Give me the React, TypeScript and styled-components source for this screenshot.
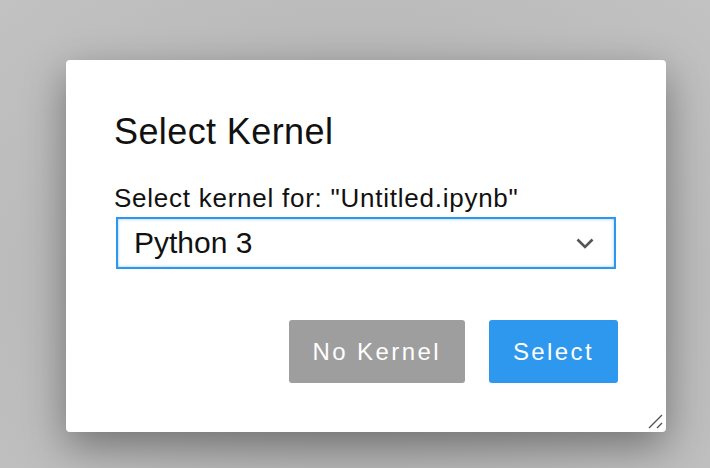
import React from "react";
import styled, { createGlobalStyle } from "styled-components";

const Global = createGlobalStyle`
  html, body { margin: 0; padding: 0; }
  body {
    background: #bdbdbd;
    font-family: "Liberation Sans", Arial, sans-serif;
    width: 710px;
    height: 468px;
    overflow: hidden;
  }
`;

const Backdrop = styled.div`
  width: 710px;
  height: 468px;
  box-sizing: border-box;
  padding: 60px 0 0 66px;
  background: radial-gradient(ellipse at 50% 60%, #a9a9a9 0%, #bcbcbc 70%, #c2c2c2 100%);
`;

const Dialog = styled.div`
  position: relative;
  width: 600px;
  height: 372px;
  box-sizing: border-box;
  background: #ffffff;
  border-radius: 4px;
  box-shadow: 0 14px 40px rgba(0, 0, 0, 0.38);
  padding: 51px 48px 0 48px;
  display: flex;
  flex-direction: column;
`;

const Title = styled.h1`
  margin: 0;
  font-size: 36px;
  font-weight: 400;
  letter-spacing: 0.4px;
  line-height: 41px;
  color: #111;
`;

const Label = styled.label`
  margin-top: 31px;
  font-size: 26px;
  line-height: 30px;
  letter-spacing: 0.75px;
  color: #111;
`;

const SelectBox = styled.div`
  margin: 4px 0 0 2px;
  width: 500px;
  height: 52px;
  box-sizing: border-box;
  border: 2px solid #2d96ee;
  box-shadow: inset 0 0 3px rgba(45, 150, 238, 0.55);
  display: flex;
  align-items: center;
  justify-content: space-between;
  padding: 0 20px 0 16px;
  font-size: 30px;
  color: #111;
`;

const Actions = styled.div`
  margin-top: 51px;
  display: flex;
  justify-content: flex-end;
  gap: 24px;
`;

const Button = styled.button<{ $variant: "neutral" | "primary" }>`
  height: 63px;
  border: none;
  border-radius: 3px;
  padding: 0 24px 0 24px;
  font-family: "Liberation Sans", Arial, sans-serif;
  font-size: 24px;
  letter-spacing: 2.4px;
  color: #fff;
  background: ${(p) => (p.$variant === "primary" ? "#2e98ee" : "#9e9e9e")};
  cursor: pointer;
`;

const Grip = styled.svg`
  position: absolute;
  right: 2px;
  bottom: 2px;
`;

export default function App() {
  return (
    <>
      <Global />
      <Backdrop>
        <Dialog>
          <Title>Select Kernel</Title>
          <Label>Select kernel for: "Untitled.ipynb"</Label>
          <SelectBox>
            <span>Python 3</span>
            <svg width="18" height="11" viewBox="0 0 18 11">
              <path d="M1.5 1.5 L9 9 L16.5 1.5" fill="none" stroke="#555" strokeWidth="2.6" />
            </svg>
          </SelectBox>
          <Actions>
            <Button $variant="neutral">No Kernel</Button>
            <Button $variant="primary">Select</Button>
          </Actions>
          <Grip width="16" height="16" viewBox="0 0 16 16">
            <path d="M1 14 L14 1 M9 14 L14 9" stroke="#555" strokeWidth="1.4" fill="none" />
          </Grip>
        </Dialog>
      </Backdrop>
    </>
  );
}
